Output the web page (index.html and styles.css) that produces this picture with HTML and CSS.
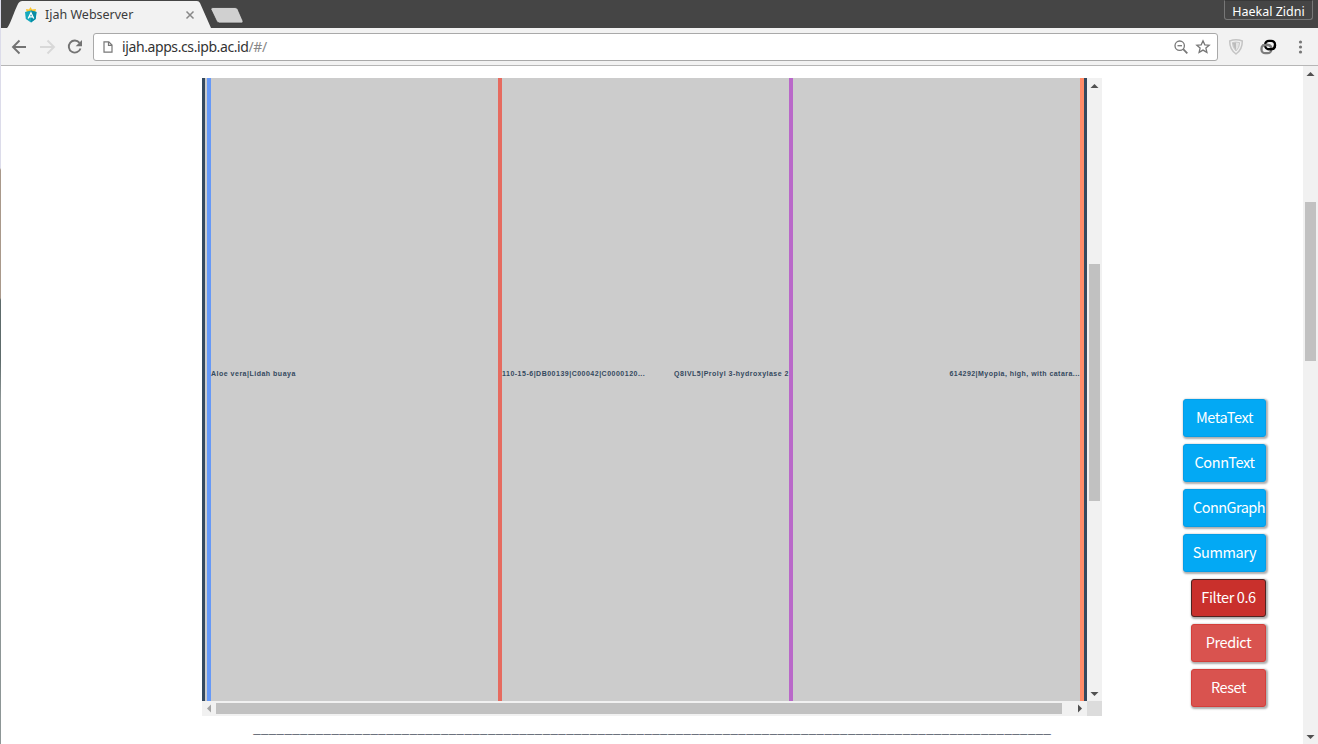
FILE: index.html
```html
<!DOCTYPE html>
<html lang="en">
<head>
<meta charset="utf-8">
<title>Ijah Webserver</title>
<link rel="stylesheet" href="styles.css">
</head>
<body>
<div class="window">
  <header class="tabstrip">
    <svg class="tab-shapes" width="260" height="28" viewBox="0 0 260 28">
      <path d="M7 28C10 26 16 6 19 2.5Q20 1 22 1H197Q199 1 200 3L211 28Z" fill="#f2f2f2"/>
      <path d="M213 7.500H235Q237 7.500 238 9.500L243 21Q243.500 23 241.500 23H219.500Q217.500 23 216.500 21L211 9.500Q210.500 7.500 213 7.500Z" fill="#d0d0d0" stroke="#333" stroke-width=".7"/>
    </svg>
    <div class="tab">
      <svg class="favicon" width="14" height="16" viewBox="0 0 14 16">
        <path d="M2 2L5 2.500 6.500 0 8 2.500 12 2 11 6H3Z" fill="#fbc52d"/>
        <path d="M1 5L7 3.500 12.500 5 11.700 12 7 15.500 1.800 12Z" fill="#16a9bd"/>
        <path d="M7 3.500L12.500 5 11.700 12 7 15.500Z" fill="#078da5"/>
        <path d="M4.200 11.500L7 5.800 9.700 11.500M5.200 9.800H8.700" fill="none" stroke="#fff" stroke-width="1.300"/>
      </svg>
      <span class="tab-title">Ijah Webserver</span>
      <svg class="tab-close" width="10" height="10" viewBox="0 0 10 10"><path d="M1.500 1.500L8.500 8.500M8.500 1.500L1.500 8.500" stroke="#888" stroke-width="1.500"/></svg>
    </div>
    <span class="user">Haekal Zidni</span>
  </header>
  <nav class="toolbar">
    <svg class="nav-icons" width="84" height="22" viewBox="0 0 84 22" fill="none" stroke-width="1.900">
      <path d="M26 11H13.500M19.500 4.500L13 11L19.500 17.500" stroke="#737373"/>
      <path d="M40 11H53M47.500 4.500L54 11L47.500 17.500" stroke="#d8d8d8"/>
      <path d="M79.500 6.800A6 6 0 1 0 80.500 12.500" stroke="#737373"/>
      <path d="M82 4V10.300H75.700Z" fill="#737373"/>
    </svg>
    <div class="omnibox">
      <svg class="page-icon" width="10" height="12" viewBox="0 0 10 12" fill="none" stroke="#777" stroke-width="1.200"><path d="M1 .8H5.800L9 4V11.200H1ZM5.500 1V4.300H9"/></svg>
      <span class="url">ijah.apps.cs.ipb.ac.id<span class="url-path">/#/</span></span>
      <svg class="omni-icons" width="38" height="18" viewBox="0 0 38 18" fill="none" stroke="#777" stroke-width="1.300">
        <circle cx="6.700" cy="7.700" r="4.700"/><path d="M4.500 7.700H9"/><path d="M10.200 11.200L14.300 15.300" stroke-width="1.800"/>
        <path d="M30 2.800L31.800 6.800 36.200 7.200 32.900 10.100 33.900 14.400 30 12.100 26.100 14.400 27.100 10.100 23.800 7.200 28.200 6.800Z"/>
      </svg>
    </div>
    <svg class="extensions" width="86" height="22" viewBox="0 0 86 22" fill="none">
      <path d="M5.700 5Q12 2.600 18.300 5Q18.400 13.500 12 18Q5.600 13.500 5.700 5Z" stroke="#c4c4c4" stroke-width="1.500"/>
      <path d="M8.300 6.600Q12 5.500 15.700 6.600Q15.400 12 12 15Q8.600 12 8.300 6.600Z" fill="#e4e4e4" stroke="#c8c8c8"/>
      <path d="M12 6.500V14.500Q9.200 11.500 8.800 7Z" fill="#bcbcbc"/>
      <rect x="37.500" y="8.800" width="9.800" height="8.400" rx="3.800" stroke="#7c7c7c" stroke-width="2.300"/>
      <rect x="41.200" y="4.800" width="9.800" height="8.400" rx="3.800" stroke="#000" stroke-width="2.300"/>
      <path d="M38.500 9.500Q40 8.800 43.500 8.800Q47.300 9 47.300 13" stroke="#7c7c7c" stroke-width="2.300"/>
      <path d="M43.500 13.200H47.500Q51 13 51 9" stroke="#000" stroke-width="2.300"/>
      <g fill="#777"><circle cx="76.500" cy="6" r="1.600"/><circle cx="76.500" cy="11" r="1.600"/><circle cx="76.500" cy="16" r="1.600"/></g>
    </svg>
  </nav>
  <div class="page">
    <main class="content">
      <section class="graph">
        <div class="diagram">
          <div class="node plant"></div>
          <div class="link"><span>Aloe vera|Lidah buaya</span></div>
          <div class="node compound"></div>
          <div class="link"><span>110-15-6|DB00139|C00042|C0000120...</span><span>Q8IVL5|Prolyl 3-hydroxylase 2</span></div>
          <div class="node protein"></div>
          <div class="link end"><span>614292|Myopia, high, with catara...</span></div>
          <div class="node disease"></div>
        </div>
        <div class="vbar">
          <svg width="9" height="5" viewBox="0 0 9 5"><path d="M.5 5L4.500 1L8.500 5Z" fill="#505050"/></svg>
          <div class="vthumb"></div>
          <svg width="9" height="5" viewBox="0 0 9 5"><path d="M.5 0L4.500 4L8.500 0Z" fill="#505050"/></svg>
        </div>
        <div class="hbar">
          <svg width="5" height="9" viewBox="0 0 5 9"><path d="M5 .5L1 4.500L5 8.500Z" fill="#a3a3a3"/></svg>
          <div class="hthumb"></div>
          <svg width="5" height="9" viewBox="0 0 5 9"><path d="M0 .5L4 4.500L0 8.500Z" fill="#505050"/></svg>
        </div>
        <div class="corner"></div>
      </section>
      <p class="divider">______________________________________________________________________________________________________</p>
    </main>
    <aside class="actions">
      <button class="btn info">MetaText</button>
      <button class="btn info">ConnText</button>
      <button class="btn info long">ConnGraph</button>
      <button class="btn info">Summary</button>
      <button class="btn danger active">Filter 0.6</button>
      <button class="btn danger">Predict</button>
      <button class="btn danger">Reset</button>
    </aside>
    <div class="page-scroll">
      <svg width="9" height="5" viewBox="0 0 9 5"><path d="M.5 5L4.500 1L8.500 5Z" fill="#505050"/></svg>
      <div class="page-thumb"></div>
      <svg width="9" height="5" viewBox="0 0 9 5"><path d="M.5 0L4.500 4L8.500 0Z" fill="#505050"/></svg>
    </div>
  </div>
</div>
</body>
</html>
```

FILE: styles.css
```css
* { box-sizing: border-box; }
body { margin: 0; background: linear-gradient(#dcdcea 0 168px, #a9998b 170px 298px, #5d6b6b 300px 360px, #8d9696 400px); }
svg { display: block; flex: none; }
.window { width: 1317px; height: 744px; margin-left: 1px; display: flex; flex-direction: column; background: #fff; overflow: hidden; font-family: "Noto Sans", sans-serif; }
.tabstrip { height: 28px; flex: none; background: #454545; display: flex; justify-content: space-between; align-items: flex-start; position: relative; }
.tab-shapes { position: absolute; left: -1px; top: 0; }
.tab { position: relative; display: flex; align-items: center; width: 200px; height: 29px; padding-left: 23px; }
.tab-title { width: 88px; margin-left: 7px; font-size: 12.500px; color: #3c3c3c; white-space: nowrap; }
.tab-close { margin-left: 52px; }
.user { width: 89px; height: 20px; margin-right: 5px; border: 1px solid #777; border-top-color: #383838; border-radius: 0 0 3px 3px; color: #fff; font-size: 12.500px; line-height: 21px; text-align: center; white-space: nowrap; }
.toolbar { height: 38px; flex: none; display: flex; align-items: center; background: #f2f2f2; border-bottom: 1px solid #b6b6b6; }
.nav-icons { margin-left: -1px; }
.omnibox { display: flex; align-items: center; width: 1125px; height: 28px; margin-left: 9px; padding-left: 9px; padding-right: 6px; background: #fff; border: 1px solid #a9a9a9; border-radius: 3px; }
.url { margin-left: 9px; font-size: 14px; letter-spacing: -.4px; color: #333; white-space: nowrap; }
.url-path { color: #888; }
.omni-icons { margin-left: auto; }
.extensions { margin-left: 6px; }
.page { flex: 1; display: flex; min-height: 0; }
.content { width: 900px; margin-left: 201px; padding-top: 12px; }
.graph { display: grid; grid-template: 623px 15px / 885px 15px; }
.diagram { display: flex; border: solid #34495e; border-width: 0 3px; padding-left: 2px; background: #ccc; }
.node { width: 4px; flex: none; }
.plant { background: #6699f7; }
.compound { background: #e66b5f; }
.protein { background: #b968c9; }
.disease { background: #ff8c69; }
.link { flex: 1; display: flex; justify-content: space-between; padding-top: 290px; background: #ccc; font: bold 7px/11px "Liberation Sans", Arial, sans-serif; letter-spacing: .5px; color: #34495e; white-space: nowrap; }
.end { justify-content: flex-end; letter-spacing: .46px; }
.vbar { display: flex; flex-direction: column; align-items: center; padding: 5px 0 4px; background: #f1f1f1; }
.vthumb { width: 11px; height: 237px; margin: 176px 0 190px; background: #c1c1c1; }
.vbar svg:last-child, .page-scroll svg:last-child { margin-top: auto; }
.hbar { display: flex; align-items: center; padding: 0 4px; background: #f1f1f1; }
.hthumb { width: 846px; height: 11px; margin: 0 auto 0 5px; background: #c1c1c1; }
.corner { background: #dcdcdc; }
.divider { margin: 1px 0 0; font: 14px/20px "Noto Sans CJK SC", sans-serif; color: #5d6470; text-align: center; white-space: nowrap; }
.actions { display: flex; flex-direction: column; align-items: flex-end; gap: 7px; width: 164px; padding-top: 333px; }
.btn { width: 83px; height: 38px; flex: none; padding: 0 0 2px; border: 1px solid #049ee8; border-radius: 3px; color: #fff; font: 14.500px/34px "Noto Sans CJK SC", sans-serif; letter-spacing: -.4px; text-align: center; white-space: nowrap; box-shadow: 1px 1px 2px 1px rgba(0,0,0,.32); }
.info { background: #03a9f4; }
.long { padding-left: 9px; letter-spacing: -.55px; }
.danger { width: 75px; background: #d9534f; border-color: #d43f3a; }
.active { background: #c9302c; border-color: #4f2320; }
.page-scroll { width: 15px; margin-left: auto; display: flex; flex-direction: column; align-items: center; padding: 5px 0 4px; background: #f1f1f1; }
.page-thumb { width: 11px; height: 159px; margin-top: 126px; background: #c1c1c1; }
```
